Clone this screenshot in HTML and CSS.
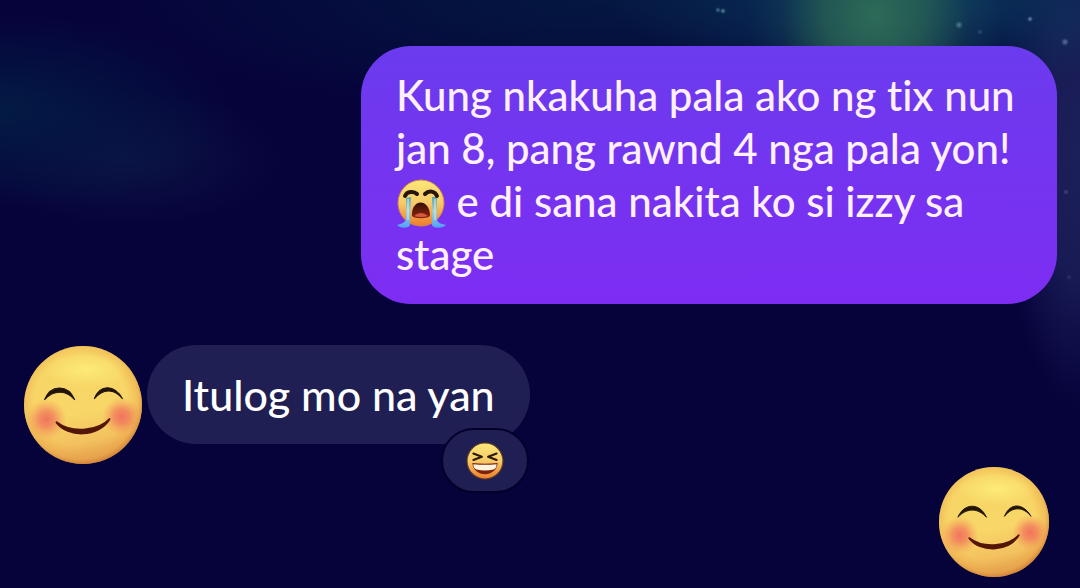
FILE: index.html
```html
<!DOCTYPE html>
<html lang="fil">
<head>
<meta charset="utf-8">
<meta name="viewport" content="width=device-width, initial-scale=1">
<title>Chat</title>
<link rel="stylesheet" href="styles.css">
</head>
<body>
<svg class="defs" aria-hidden="true">
  <defs>
    <linearGradient id="skin" x1="0.4" y1="0" x2="0.6" y2="1">
      <stop offset="0" stop-color="#f6d565"/><stop offset="0.55" stop-color="#f8d768"/><stop offset="0.8" stop-color="#f3c15e"/><stop offset="1" stop-color="#e09b4a"/>
    </linearGradient>
    <radialGradient id="rim" cx="0.48" cy="0.47" r="0.54">
      <stop offset="0.72" stop-color="#eea447" stop-opacity="0"/><stop offset="0.9" stop-color="#e9a148" stop-opacity="0.45"/><stop offset="1" stop-color="#c8712d" stop-opacity="0.75"/>
    </radialGradient>
    <radialGradient id="shine"><stop offset="0" stop-color="#fff07c" stop-opacity="0.8"/><stop offset="1" stop-color="#fff07c" stop-opacity="0"/></radialGradient>
    <radialGradient id="blush"><stop offset="0" stop-color="#f0625c" stop-opacity="0.85"/><stop offset="0.4" stop-color="#f16d5a" stop-opacity="0.65"/><stop offset="1" stop-color="#f59056" stop-opacity="0"/></radialGradient>
    <linearGradient id="small-skin" x1="0" y1="0" x2="0" y2="1"><stop offset="0" stop-color="#fbe878"/><stop offset="0.5" stop-color="#f6ca68"/><stop offset="1" stop-color="#ed7d2b"/></linearGradient>
    <linearGradient id="tear" x1="0" y1="0" x2="0" y2="1"><stop offset="0" stop-color="#5fa5ad"/><stop offset="0.45" stop-color="#a8cfc8"/><stop offset="1" stop-color="#4fa2fa"/></linearGradient>
    <linearGradient id="mouth" x1="0" y1="0" x2="0" y2="1"><stop offset="0" stop-color="#351008"/><stop offset="1" stop-color="#92230f"/></linearGradient>
    <symbol id="smile" viewBox="0 0 118 118">
      <circle cx="59" cy="59" r="58" fill="url(#skin)"/>
      <circle cx="59" cy="59" r="58" fill="url(#rim)"/>
      <ellipse cx="62" cy="24" rx="42" ry="17" fill="url(#shine)"/>
      <circle cx="23" cy="73" r="20" fill="url(#blush)"/>
      <circle cx="97" cy="70" r="19" fill="url(#blush)"/>
      <path d="M21 54 C27 39 44 38 51 54 C43 45 31 43 21 54Z" fill="#21140b" stroke="#21140b"/>
      <path d="M70 53 C76 38 90 39 98 53 C90 43 79 42 70 53Z" fill="#21140b" stroke="#21140b"/>
      <path d="M33 76 C44 91 74 91 85 73 C75 84 49 88 33 76Z" fill="#541607" stroke="#541607" stroke-width="2" stroke-linejoin="round"/>
    </symbol>
  </defs>
</svg>
<main class="chat">
  <section class="message sent">
    <p class="bubble">Kung nkakuha pala ako ng tix nun jan 8, pang rawnd 4 nga pala yon! <svg class="emoji" viewBox="0 0 50 50" role="img" aria-label="Loudly crying face">
      <circle cx="25" cy="24" r="23" fill="url(#small-skin)" stroke="#d78945"/>
      <path d="M10 19v22C8 44 5 45 1 46C3 49 13 50 14 46L15 18ZM36 18v28C37 50 48 49 50 46C45 45 42 44 41 41V18Z" fill="url(#tear)"/>
      <path d="M12 20V41M39 20V41" stroke="#d3edf0" fill="none"/>
      <path d="M9 17C11 12 18 12 21 15M29 15C33 11 39 12 41 17" stroke="#28150c" stroke-width="4" fill="none" stroke-linecap="round"/>
      <path d="M16 37C15 19 34 19 34 37C31 40 19 40 16 37Z" fill="url(#mouth)"/>
      <path d="M18 37Q25 31 32 37Q25 39 18 37Z" fill="#d65a42"/>
    </svg> e di sana nakita ko si izzy sa stage</p>
  </section>
  <section class="message received">
    <svg class="avatar" role="img" aria-label="Sender"><use href="#smile"/></svg>
    <div class="bubble-wrap">
      <p class="bubble">Itulog mo na yan</p>
      <button class="reaction" type="button" aria-label="Laughing reaction">
        <svg class="laugh" viewBox="0 0 36 36" aria-hidden="true">
          <circle cx="18" cy="18" r="17" fill="url(#small-skin)" stroke="#67401f"/>
          <path d="M7 11L15 14L7 17M29 11L21 14L29 17" fill="none" stroke="#2a1a0d" stroke-width="2" stroke-linecap="round" stroke-linejoin="round"/>
          <path d="M6 20Q18 21 30 20C29 34 7 34 6 20Z" fill="#7d210e"/>
          <path d="M7 21Q18 22 29 21Q29 25 26 26Q18 28 10 26Q7 25 7 21Z" fill="#fff4dc"/>
        </svg>
      </button>
    </div>
  </section>
  <footer class="receipt"><svg class="seen" role="img" aria-label="Seen"><use href="#smile"/></svg></footer>
</main>
</body>
</html>
```
FILE: styles.css
```css
* { box-sizing: border-box; }

body {
  margin: 0;
  min-height: 100vh;
  color: #fff;
  font-family: Lato, "Noto Sans", sans-serif;
  font-size: 42px;
  font-weight: 500;
  font-variant-ligatures: none;
  line-height: 53px;
  background:
    radial-gradient(circle at 718px 10px, #45708c 0, transparent 3px),
    radial-gradient(circle at 723px 11px, #5589a1 0, transparent 3px),
    radial-gradient(circle at 959px 25px, #4d8190 0, transparent 4px),
    radial-gradient(circle at 980px 32px, #304a80 0, transparent 3px),
    radial-gradient(circle at 1030px 19px, #6687a7 0, transparent 3px),
    radial-gradient(circle at 1065px 42px, #66709c 0, transparent 4px),
    radial-gradient(circle at 1066px 192px, #444a79 0, transparent 3px),
    radial-gradient(circle at 1069px 277px, #333064 0, transparent 3px),
    radial-gradient(ellipse 125px 140px at 875px 15px, #2d6b58 0, #286052cc 40%, #1b4a5240 75%, transparent 100%),
    radial-gradient(ellipse 300px 90px at 910px 0, #0b3c60 0, transparent 100%),
    radial-gradient(ellipse 80px 260px at 1080px 150px, #1c205a 0, #1c205acc 50%, transparent 100%),
    radial-gradient(ellipse 240px 100px at 0 110px, #031b45 0, transparent 100%),
    radial-gradient(ellipse 160px 70px at 130px 160px, #0c1344 0, transparent 100%),
    radial-gradient(ellipse 520px 120px at 600px 0, #041841 0, transparent 100%),
    #06023a;
}

.defs { position: absolute; width: 0; height: 0; }

.chat { padding: 46px 23px 8px; }

.message { display: flex; }
.sent { justify-content: flex-end; }
.received { align-items: flex-start; gap: 4px; margin-top: 41px; }

.bubble {
  margin: 0;
  padding: 23px 35px;
  border-radius: 50px;
}
.sent .bubble {
  max-width: 696px;
  color: #fff0ff;
  background: linear-gradient(#6b3bee, #7d2df2);
}
.received .bubble {
  font-size: 43px;
  background: #201f53;
}

.emoji { width: 50px; height: 50px; margin: -10px 0 -4px; vertical-align: -8px; }
.avatar { width: 120px; height: 120px; flex: none; }
.bubble-wrap { position: relative; }

.reaction {
  position: absolute;
  right: 1px;
  bottom: -49px;
  display: grid;
  place-items: center;
  width: 88px;
  height: 65px;
  padding: 0;
  border: 2px solid #03012a;
  border-radius: 33px;
  background: #201f53;
}
.laugh { width: 38px; height: 38px; }

.receipt { display: flex; justify-content: flex-end; padding: 1px 7px 0; }
.seen { width: 112px; height: 112px; }
```
